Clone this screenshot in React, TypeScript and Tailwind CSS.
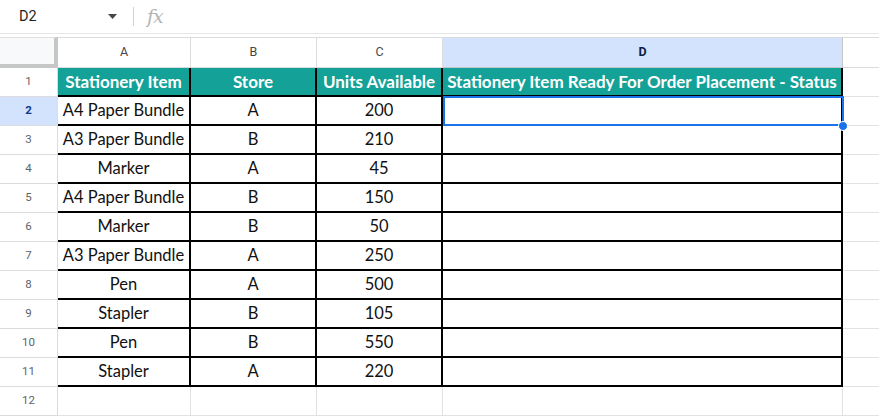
import React from "react";

const rows: [string, string, string][] = [
  ["A4 Paper Bundle", "A", "200"],
  ["A3 Paper Bundle", "B", "210"],
  ["Marker", "A", "45"],
  ["A4 Paper Bundle", "B", "150"],
  ["Marker", "B", "50"],
  ["A3 Paper Bundle", "A", "250"],
  ["Pen", "A", "500"],
  ["Stapler", "B", "105"],
  ["Pen", "B", "550"],
  ["Stapler", "A", "220"],
];

const dataFont = "font-['Lato',sans-serif]";

function RowHeader({ n, selected }: { n: number; selected?: boolean }) {
  return (
    <div
      className={
        "flex items-center justify-center border-r border-b border-[#dadce0] text-[11.5px] font-['Roboto',sans-serif] " +
        (selected ? "bg-[#d3e3fd] text-[#0b3a8c] font-bold" : "bg-white text-[#5f6368]")
      }
    >
      {n}
    </div>
  );
}

export default function App() {
  return (
    <div className="w-[879px] h-[417px] bg-white overflow-hidden font-['Roboto',sans-serif]">
      {/* formula bar */}
      <div className="h-[34px] flex items-center border-b border-[#e6e6e6]">
        <div className="w-[125px] flex items-center pl-[19px] pr-[8px]">
          <span className="text-[14.5px] text-[#1f1f1f] flex-1">D2</span>
          <svg width="9" height="5" viewBox="0 0 9 5">
            <path d="M0 0 L9 0 L4.5 5 Z" fill="#444746" />
          </svg>
        </div>
        <div className="w-px h-[19px] bg-[#d3d3d3] ml-[8px]" />
        <span className="ml-[13px] text-[19px] italic text-[#b4b4b4] font-['DejaVu_Serif',serif] tracking-[-1px]">fx</span>
      </div>
      <div className="h-[3px]" />
      <div className="relative">
        <div className="grid grid-cols-[58px_133px_126px_126px_400px_36px] grid-rows-[31px_repeat(12,29px)]">
          {/* column headers */}
          <div className="bg-[#f8f9fa] border-r-[4px] border-b-[4px] border-[#c4c7c5] border-t border-t-[#e0e0e0]" />
          {["A", "B", "C"].map((c) => (
            <div
              key={c}
              className="flex items-center justify-center text-[12.5px] text-[#444746] bg-white border-t border-r border-b border-[#dadce0]"
            >
              {c}
            </div>
          ))}
          <div className="flex items-center justify-center text-[12.5px] font-bold text-[#0b1f48] bg-[#d3e3fd] border-t border-r border-b border-t-[#dadce0] border-r-[#c4c7c5] border-b-[#c4c7c5]">
            D
          </div>
          <div className="bg-white border-t border-b border-[#dadce0]" />

          {/* row 1 */}
          <RowHeader n={1} />
          {["Stationery Item", "Store", "Units Available", "Stationery Item Ready For Order Placement - Status"].map(
            (t) => (
              <div
                key={t}
                className={
                  "flex items-center justify-center bg-[#14a197] text-white font-bold text-[17px] whitespace-nowrap border-r-2 border-b-2 border-black " +
                  dataFont
                }
              >
                {t}
              </div>
            )
          )}
          <div className="border-b border-[#e2e2e2]" />

          {rows.map((r, i) => (
            <React.Fragment key={i}>
              <RowHeader n={i + 2} selected={i === 0} />
              {r.map((v, j) => (
                <div
                  key={j}
                  className={
                    "flex items-center justify-center text-[16.5px] text-[#111] whitespace-nowrap border-r-2 border-b-2 border-black " +
                    dataFont
                  }
                >
                  {v}
                </div>
              ))}
              <div className="border-r-2 border-b-2 border-black" />
              <div className="border-b border-[#e2e2e2]" />
            </React.Fragment>
          ))}

          {/* row 12 */}
          <RowHeader n={12} />
          {[0, 1, 2, 3].map((k) => (
            <div key={k} className="border-r border-b border-[#e2e2e2]" />
          ))}
          <div className="border-b border-[#e2e2e2]" />
        </div>

        {/* selection */}
        <div className="absolute left-[443px] top-[59px] w-[401px] h-[30px] border-2 border-[#1a73e8] pointer-events-none" />
        <div className="absolute left-[838px] top-[84px] w-[10px] h-[10px] rounded-full bg-[#1a73e8] border border-white pointer-events-none" />
      </div>
    </div>
  );
}
